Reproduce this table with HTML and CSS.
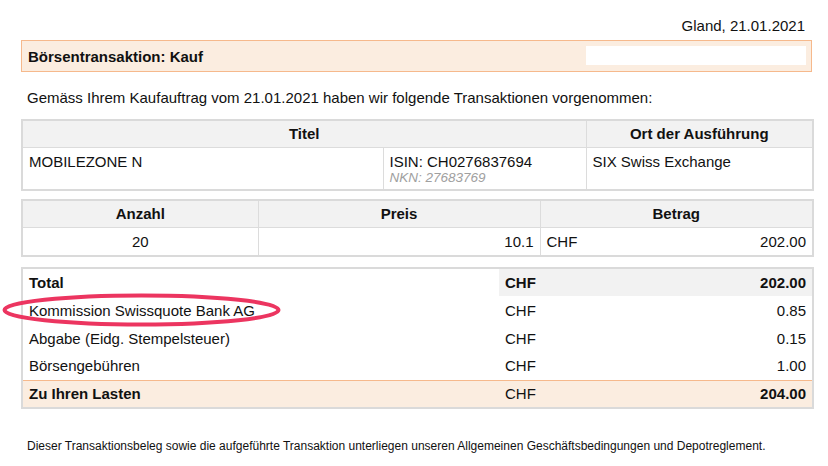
FILE: index.html
```html
<!DOCTYPE html>
<html lang="de">
<head>
<meta charset="utf-8">
<title>Börsentransaktion: Kauf</title>
<link rel="stylesheet" href="styles.css">
</head>
<body>
<div class="page">
  <div class="place">Gland, 21.01.2021</div>
  <div class="titlebar">
    <span class="title">Börsentransaktion: Kauf</span>
    <span class="blank"></span>
  </div>
  <p class="intro">Gemäss Ihrem Kaufauftrag vom 21.01.2021 haben wir folgende Transaktionen vorgenommen:</p>

  <table class="grid t1">
    <colgroup><col class="c1a"><col class="c1b"><col class="c1c"></colgroup>
    <thead>
      <tr><th colspan="2">Titel</th><th>Ort der Ausführung</th></tr>
    </thead>
    <tbody>
      <tr class="tall">
        <td>MOBILEZONE N</td>
        <td>ISIN: CH0276837694<span class="nkn">NKN: 27683769</span></td>
        <td>SIX Swiss Exchange</td>
      </tr>
    </tbody>
  </table>

  <table class="grid t2">
    <colgroup><col class="c2a"><col class="c2b"><col class="c2c"></colgroup>
    <thead>
      <tr><th>Anzahl</th><th>Preis</th><th>Betrag</th></tr>
    </thead>
    <tbody>
      <tr>
        <td class="center">20</td>
        <td class="right">10.1</td>
        <td><div class="money"><span>CHF</span><span>202.00</span></div></td>
      </tr>
    </tbody>
  </table>

  <div class="summary-wrap">
    <table class="summary">
      <colgroup><col class="s1"><col class="s2"><col class="s3"></colgroup>
      <tr class="total">
        <td>Total</td><td class="cur">CHF</td><td class="right">202.00</td>
      </tr>
      <tr>
        <td>Kommission Swissquote Bank AG</td><td>CHF</td><td class="right">0.85</td>
      </tr>
      <tr>
        <td>Abgabe (Eidg. Stempelsteuer)</td><td>CHF</td><td class="right">0.15</td>
      </tr>
      <tr>
        <td>Börsengebühren</td><td>CHF</td><td class="right">1.00</td>
      </tr>
      <tr class="charge">
        <td>Zu Ihren Lasten</td><td class="normal">CHF</td><td class="right">204.00</td>
      </tr>
    </table>
    <svg class="mark" width="282" height="38" viewBox="0 0 282 38" aria-hidden="true">
      <ellipse cx="140.5" cy="19" rx="137" ry="14.5" fill="none" stroke="#ec3560" stroke-width="4"/>
    </svg>
  </div>

  <p class="footer">Dieser Transaktionsbeleg sowie die aufgeführte Transaktion unterliegen unseren Allgemeinen Geschäftsbedingungen und Depotreglement.</p>
</div>
</body>
</html>
```

FILE: styles.css
```css
* { box-sizing: border-box; }

html, body {
  margin: 0;
  padding: 0;
  background: #fff;
}

body {
  font-family: "Liberation Sans", Arial, Helvetica, sans-serif;
  font-size: 15px;
  color: #111;
}

.page {
  width: 791px;
  margin-left: 21px;
  padding-top: 17px;
}

.place {
  text-align: right;
  padding-right: 7px;
  line-height: 17px;
  height: 23px;
}

.titlebar {
  display: flex;
  align-items: center;
  justify-content: space-between;
  height: 32px;
  background: #fbede0;
  border: 1px solid #f6b98c;
  padding: 0 5px 0 6px;
}

.title {
  font-weight: bold;
}

.blank {
  width: 220px;
  height: 19px;
  background: #fff;
  margin-bottom: 1px;
}

.intro {
  margin: 0;
  padding-left: 6px;
  line-height: 17px;
  padding-top: 17px;
  height: 47px;
}

.grid {
  width: 791px;
  border-collapse: collapse;
  table-layout: fixed;
  border: 2px solid #dadada;
}

.t1 { margin-bottom: 8px; }
.t2 { margin-bottom: 10px; }

.grid th,
.grid td {
  border: 1px solid #dcdcdc;
  padding: 0 6px;
  line-height: 17px;
  vertical-align: middle;
}

.grid th {
  background: #f2f2f2;
  font-weight: bold;
  text-align: center;
  height: 27px;
}

.grid td {
  height: 28px;
}

.t2 td {
  height: 29px;
}

.grid tr.tall td {
  height: 43px;
  vertical-align: top;
  padding-top: 5px;
}

.c1a { width: 361px; }
.c1b { width: 203px; }
.c1c { width: 227px; }

.c2a { width: 236px; }
.c2b { width: 282px; }
.c2c { width: 273px; }

.nkn {
  display: block;
  color: #a0a0a0;
  font-style: italic;
  font-size: 13.5px;
  line-height: 15px;
}

.center { text-align: center; }
.right { text-align: right; }

.money {
  display: flex;
  justify-content: space-between;
}

.summary-wrap {
  position: relative;
}

.summary {
  width: 791px;
  border-collapse: collapse;
  table-layout: fixed;
  border: 2px solid #dadada;
}

.summary td {
  height: 28px;
  padding: 0 6px;
  line-height: 17px;
  vertical-align: middle;
}

.s1 { width: 477px; }
.s2 { width: 160px; }
.s3 { width: 154px; }

.summary .total td {
  font-weight: bold;
}

.summary .total td.cur,
.summary .total td.right {
  background: #f2f2f2;
}

.summary .charge td {
  background: #fbede0;
  border-top: 1px solid #f6b98c;
  font-weight: bold;
}

.summary .charge td.normal {
  font-weight: normal;
}

.mark {
  position: absolute;
  left: -20px;
  top: 24px;
  overflow: visible;
}

.footer {
  margin: 0;
  padding-top: 30px;
  padding-left: 6px;
  font-size: 12px;
  line-height: 14px;
}
```
